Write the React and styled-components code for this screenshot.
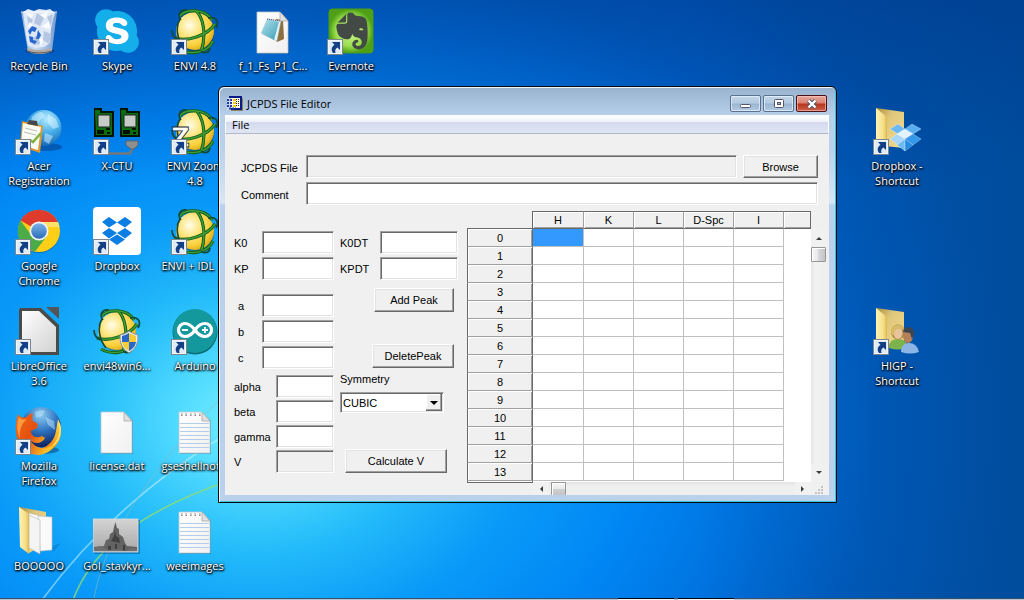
import React from "react";
import styled, { createGlobalStyle } from "styled-components";
import { FaSkype, FaEvernote } from "react-icons/fa";

const uiFont = '"Open Sans", "Noto Sans", sans-serif';
const formFont = '"Liberation Sans", Arial, sans-serif';

const GlobalStyle = createGlobalStyle`
  *, *::before, *::after { box-sizing: border-box; }
  body { margin: 0; overflow: hidden; background: #0060c8; font-family: ${formFont}; font-size: 11px; }
  button, input, select { font: inherit; color: inherit; }
`;

/* ---------- desktop ---------- */

const Desktop = styled.div`
  position: relative;
  min-height: 100vh;
  display: flex;
  flex-direction: column;
  overflow: hidden;
  background:
    linear-gradient(to bottom, rgba(0, 50, 130, 0.4), rgba(0, 60, 140, 0) 30%),
    linear-gradient(to right, rgba(0, 64, 124, 0) 68%, rgba(0, 64, 124, 0.42) 100%),
    radial-gradient(ellipse 74% 98% at 25% 70%, #7cf0ff 0%, #56deff 9%, #24bcfa 22%, #0a9af8 36%, #0086f4 52%, #0070dc 68%, #005fc6 82%, #0056b6 100%);
`;

const Wallpaper = styled.svg`
  position: absolute;
  left: 0;
  bottom: 0;
`;

const IconGrid = styled.div`
  position: relative;
  flex: 1;
  display: grid;
  grid-template-columns: repeat(13, 78px);
  grid-template-rows: repeat(5, 100px) auto;
  padding-top: 7px;
`;

const Shortcut = styled.button`
  grid-column: ${(p) => p.$col};
  grid-row: ${(p) => p.$row};
  display: flex;
  flex-direction: column;
  align-items: center;
  align-self: start;
  gap: 3px;
  padding: 0;
  border: 0;
  background: none;
  color: #fff;
  font-family: ${uiFont};
  font-size: 11px;
  line-height: 15px;
  white-space: pre;
  text-shadow: 0 1px 2px #000, 1px 1px 2px #000, 0 0 3px rgba(0, 0, 0, 0.7);

  svg { text-shadow: none; }
`;

const Taskbar = styled.footer`
  position: relative;
  display: flex;
  justify-content: flex-start;
  height: 2px;
  padding-left: 60.4%;
  gap: 4px;
  background: #b4c4d4;
  border-top: 1px solid #3a5068;
`;

const TaskEdge = styled.span`
  width: 56px;
  height: 1px;
  background: #f4f6f8;
  box-shadow: 0 -1px #05080c;
`;

/* ---------- window ---------- */

const Window = styled.section`
  position: absolute;
  left: 218px;
  top: 86px;
  width: 619px;
  padding: 0 7px 7px 6px;
  border: 1px solid #0a0a0a;
  border-radius: 6px 6px 0 0;
  background: linear-gradient(to bottom, #98b2cf 0, #b7cfe9 28px, #b9d1ea 60px, #d9e6f4 116px, #b9d1ea 118px);
  box-shadow: inset 1px 1px #eef5fc, inset -1px -1px #35c6de;
  color: #000;
`;

const TitleBar = styled.header`
  display: flex;
  align-items: center;
  gap: 4px;
  height: 28px;
  padding: 5px 2px 0 2px;
  font-family: ${uiFont};
  font-size: 11px;
`;

const Title = styled.h1`
  flex: 1;
  margin: 0;
  font-size: 11px;
  font-weight: 400;
`;

const CaptionButtons = styled.div`
  display: flex;
  gap: 2px;
`;

const CaptionButton = styled.button`
  display: flex;
  align-items: center;
  justify-content: center;
  width: 31px;
  height: 17px;
  padding: 0;
  border: 1px solid ${(p) => (p.$close ? "#4c1017" : "#5a7190")};
  border-radius: 2px;
  background: ${(p) =>
    p.$close
      ? "linear-gradient(#e6a89c 0, #d98374 7px, #b8351c 8px, #c9604a 100%)"
      : "linear-gradient(#c3d6ea 0, #b4cae1 7px, #9bb5d0 8px, #b3cbe4 100%)"};
  box-shadow: inset 0 0 0 1px ${(p) => (p.$close ? "rgba(255,210,200,.55)" : "rgba(235,245,255,.7)")};
`;

const Client = styled.div`
  background: #f0f0f0;
`;

const MenuBar = styled.nav`
  height: 19px;
  border-left: 1px solid #fff;
  border-right: 1px solid #fff;
  border-bottom: 1px solid #b2b8cc;
  background: linear-gradient(#fff 0, #eef1f8 7px, #d4daed 7px, #e0e5f4 100%);
`;

const MenuButton = styled.button`
  display: block;
  padding: 0 6px;
  border: 0;
  background: none;
  font-family: ${uiFont};
  font-size: 11px;
  line-height: 19px;
`;

const Editor = styled.form`
  padding-top: 21px;
`;

const FileRows = styled.div`
  display: flex;
  flex-direction: column;
  gap: 4px;
  padding: 0 11px 6px 16px;
`;

const FileRow = styled.div`
  display: flex;
  align-items: center;
`;

const FileLabel = styled.label`
  width: 65px;
  padding-top: 3px;
`;

const TextBox = styled.input`
  flex: ${(p) => (p.$width ? "none" : 1)};
  width: ${(p) => (p.$width ? `${p.$width}px` : "auto")};
  min-width: 0;
  height: 23px;
  padding: 0 4px;
  outline: 0;
  border: 1px solid;
  border-color: #a0a0a0 #fff #fff #a0a0a0;
  border-radius: 0;
  background: ${(p) => (p.readOnly ? "#f0f0f0" : "#fff")};
  box-shadow: inset 1px 1px #696969, inset -1px -1px #e3e3e3;
`;

const PushButton = styled.button`
  width: ${(p) => p.$width}px;
  height: ${(p) => p.$height || 24}px;
  padding: 0;
  border: 1px solid;
  border-color: #fff #696969 #696969 #fff;
  background: #f0f0f0;
  box-shadow: inset -1px -1px #a0a0a0, inset 1px 1px #e3e3e3;
`;

const BrowseButton = styled(PushButton)`
  margin-left: 6px;
`;

const Workspace = styled.div`
  display: flex;
  align-items: flex-start;
  padding: 0 2px 0 9px;
`;

const FieldColumn = styled.div`
  display: flex;
  flex-direction: column;
  gap: 14px;
  width: 100px;
  margin: 20px 6px 0 0;
`;

const FieldGroup = styled.div`
  display: flex;
  flex-direction: column;
  gap: ${(p) => p.$gap || 3}px;
`;

const LowerFields = styled(FieldGroup)`
  margin-top: -8px;
`;

const Field = styled.div`
  display: flex;
  align-items: center;
  justify-content: space-between;
  padding-left: ${(p) => p.$indent || 0}px;
`;

const ActionColumn = styled.div`
  display: flex;
  flex-direction: column;
  width: 118px;
  margin: 20px 9px 0 0;
`;

const PeakButtons = styled.div`
  display: flex;
  flex-direction: column;
  align-items: flex-end;
  gap: 32px;
  padding: 8px 4px 4px 0;
`;

const SymmetryField = styled.div`
  display: flex;
  flex-direction: column;
  gap: 6px;
  line-height: 14px;
`;

const SelectFrame = styled.div`
  position: relative;
  width: 104px;
`;

const Select = styled.select`
  appearance: none;
  display: block;
  width: 100%;
  height: 21px;
  padding: 0 18px 0 2px;
  outline: 0;
  border: 1px solid;
  border-color: #a0a0a0 #fff #fff #a0a0a0;
  border-radius: 0;
  background: #fff;
  box-shadow: inset 1px 1px #696969, inset -1px -1px #e3e3e3;
`;

const SelectArrow = styled.svg`
  position: absolute;
  top: 2px;
  right: 2px;
  pointer-events: none;
`;

const CalculateRow = styled.div`
  padding: 36px 0 0 5px;
`;

/* ---------- spreadsheet ---------- */

const Sheet = styled.div`
  flex: 1;
  display: grid;
  grid-template-columns: 1fr 16px;
`;

const Table = styled.table`
  width: 100%;
  table-layout: fixed;
  border-spacing: 0;
  text-align: center;
  line-height: 14px;

  th, td { height: 18px; padding: 0; font-weight: 400; }
`;

const Corner = styled.td`
  border-right: 1px solid #696969;
  border-bottom: 1px solid #696969;
`;

const ColumnHead = styled.th`
  border-top: 1px solid #696969;
  border-bottom: 1px solid #696969;
  border-right: 1px solid ${(p) => (p.$last ? "#696969" : "#a0a0a0")};
  background: #f0f0f0;
  box-shadow: inset 1px 1px #fff, inset 0 -1px #a0a0a0;
`;

const RowHead = styled.th`
  border-left: 1px solid #696969;
  border-right: 1px solid #696969;
  border-bottom: 1px solid #a0a0a0;
  background: #f0f0f0;
  box-shadow: inset 1px 1px #fff, inset -1px 0 #a0a0a0;
`;

const Cell = styled.td`
  border-right: 1px solid #c0c0c0;
  border-bottom: 1px solid #c0c0c0;
  background: ${(p) => (p.$selected ? "#3399ff" : "#fff")};
`;

const Blank = styled.td`
  background: #fff;
`;

const SheetFoot = styled.div`
  grid-column: 1 / -1;
  display: flex;
  height: 14px;
`;

const HeadFoot = styled.div`
  width: 66px;
  height: 2px;
  border: 1px solid #696969;
  border-top: 0;
  background: #fff;
`;

const HorizontalBar = styled.div`
  flex: 1;
  display: flex;
  align-items: center;
  justify-content: space-between;
  overflow: hidden;
  border-top: 1px solid #fff;
  background: linear-gradient(#e3e3e3, #efefef 4px);
`;

const VerticalBar = styled.div`
  display: flex;
  flex-direction: column;
  align-items: flex-start;
  margin-top: 18px;
  background: linear-gradient(to right, #e6e6e6, #f1f1f1 4px, #efefef);
`;

const ArrowButton = styled.button`
  display: flex;
  align-items: center;
  justify-content: center;
  width: 16px;
  height: ${(p) => p.$height || 17}px;
  padding: 0;
  border: 0;
  background: #f1f1f1;
`;

const Thumb = styled.div`
  width: 15px;
  height: ${(p) => (p.$flat ? 13 : 15)}px;
  border: 1px solid #979797;
  border-bottom-width: ${(p) => (p.$flat ? 0 : 1)}px;
  border-radius: 1px;
  background: ${(p) =>
    p.$flat
      ? "linear-gradient(#f5f5f5 0, #eaeaea 50%, #d0d0d0 52%, #c4c4c8)"
      : "linear-gradient(to right, #f5f5f5 0, #e9e9eb 45%, #d7d7da 50%, #c4c4c8)"};
  box-shadow: inset 1px 1px #fff;
`;

const Track = styled.div`
  flex: 1;
`;

const TrackGap = styled.div`
  width: 2px;
  height: 1px;
`;

const Grip = styled.div`
  display: flex;
  align-items: flex-end;
  justify-content: flex-end;
  width: 16px;
  background: #f0f0f0;
`;

/* ---------- icon drawings ---------- */

const Gradients = () => (
  <svg width="0" height="0" style={{ position: "absolute" }} aria-hidden="true">
    <defs>
      <radialGradient id="gold" cx=".36" cy=".35" r=".72">
        <stop offset="0" stopColor="#fffdea" />
        <stop offset=".35" stopColor="#ffe88c" />
        <stop offset=".75" stopColor="#fbcf38" />
        <stop offset="1" stopColor="#d8a418" />
      </radialGradient>
      <radialGradient id="globe" cx=".6" cy=".25" r=".85">
        <stop offset="0" stopColor="#b8ecff" />
        <stop offset=".45" stopColor="#48aee8" />
        <stop offset="1" stopColor="#0a55a8" />
      </radialGradient>
      <radialGradient id="foxGlobe" cx=".5" cy=".2" r=".8">
        <stop offset="0" stopColor="#8ccbf2" />
        <stop offset=".5" stopColor="#2f74c0" />
        <stop offset="1" stopColor="#0b1f5c" />
      </radialGradient>
      <linearGradient id="fox" x1="0" y1="0" x2="1" y2=".6">
        <stop offset="0" stopColor="#f06a1c" />
        <stop offset=".5" stopColor="#e4500e" />
        <stop offset="1" stopColor="#fbc52c" />
      </linearGradient>
      <linearGradient id="foxTail" x1="0" y1="1" x2="1" y2="0">
        <stop offset="0" stopColor="#e04d0c" />
        <stop offset=".5" stopColor="#f7941d" />
        <stop offset="1" stopColor="#ffe34d" />
      </linearGradient>
      <linearGradient id="folderFront" x1="0" x2="1">
        <stop offset="0" stopColor="#fff3b8" />
        <stop offset=".7" stopColor="#f5dd84" />
        <stop offset="1" stopColor="#d9b850" />
      </linearGradient>
      <linearGradient id="folderBack" x1="0" x2="1" y2="1">
        <stop offset="0" stopColor="#a88d3c" />
        <stop offset=".35" stopColor="#dfc67a" />
        <stop offset="1" stopColor="#f2dc90" />
      </linearGradient>
      <linearGradient id="sheetPaper" x1="0" x2="1" y2="1">
        <stop offset="0" stopColor="#fff" />
        <stop offset="1" stopColor="#f0f0f0" />
      </linearGradient>
      <linearGradient id="libre" x1="0" x2="1" y2="1">
        <stop offset="0" stopColor="#fff" />
        <stop offset="1" stopColor="#d2d2d2" />
      </linearGradient>
      <linearGradient id="pad" x1="0" x2="1" y2="1">
        <stop offset="0" stopColor="#b7e4ee" />
        <stop offset="1" stopColor="#3b9db5" />
      </linearGradient>
      <radialGradient id="leaf">
        <stop offset="0" stopColor="#d4f59a" />
        <stop offset=".7" stopColor="#9ade4c" />
        <stop offset="1" stopColor="#4fa016" />
      </radialGradient>
      <linearGradient id="chromeBlue" x2="0" y2="1">
        <stop offset="0" stopColor="#7db4e8" />
        <stop offset="1" stopColor="#2a6cb8" />
      </linearGradient>
      <linearGradient id="binGlass" x2="1">
        <stop offset="0" stopColor="#8fb0dc" />
        <stop offset=".4" stopColor="#e4eefa" />
        <stop offset="1" stopColor="#7d9fd0" />
      </linearGradient>
      <linearGradient id="fog" x2="0" y2="1">
        <stop offset="0" stopColor="#d4d4d4" />
        <stop offset="1" stopColor="#a8a8a8" />
      </linearGradient>
    </defs>
  </svg>
);

const LinkArrow = () => (
  <g>
    <rect x=".5" y="32.500" width="15" height="15" fill="#f2f6fa" stroke="#7c868e" />
    <rect x="2" y="34" width="12" height="12" fill="#dfeaf5" />
    <path d="M5 35h8v8l-2.600-2.500c-2 1.300-2.600 3.200-1.900 5.500H6C3.700 42.500 4.700 39.700 7.500 37.700z" fill="#123f86" />
  </g>
);

const Bin = () => (
  <>
    <ellipse cx="25" cy="44" rx="15" ry="3" fill="#042c70" opacity=".45" />
    <path d="M6 5h36l-5 39q-12 5-24 0z" fill="url(#binGlass)" opacity=".9" />
    <path d="M8 5l5-3 6 2 5-2 7 1 4-1 5 4-2 6-2 10-1 14-6 4-8 1-8-2-2-10z" fill="#dfe8f6" />
    <path d="M12 9l6 4-4 7zM22 6l7 5-4 8-6-3zM32 10l6-3-2 12zM16 32l7-4 2 9-7 1zM29 24l7 3-2 10-6-4z" fill="#b4c6e2" />
    <path d="M11 6l8 1-3 4zM25 8l8-3-2 7zM26 20l8-6 1 8zM24 30l4 2-2 8zM12 20l3-5 5 6z" fill="#fafcff" />
    <path d="M13 24l4-5 5 2-2 4-3-1-2 4zM23 23l3 5-2 4h-3l1-4zM14 29l4 1v3l4 1-2 3-5-2z" fill="#2765d0" />
    <path d="M12 41q12 4 25 0l-.5 3.500q-12 5-24 0z" fill="#b3aaa2" />
    <path d="M12 44q12 4 24.500 0" fill="none" stroke="#5c5b60" />
    <path d="M6 5h36" stroke="#fff" strokeWidth="1.200" opacity=".8" />
  </>
);

const Skype = () => (
  <>
    <circle cx="24" cy="24" r="15" fill="#fff" />
    <FaSkype x="-1" y="-1" size={50} color="#14aeea" />
  </>
);

const EnviGlobe = () => (
  <>
    <ellipse cx="25" cy="27" rx="18" ry="18" fill="#06301a" opacity=".4" />
    <circle cx="24" cy="24" r="19" fill="url(#gold)" />
    <g fill="none" stroke="#155f1c" strokeWidth="3.200">
      <path d="M9 9C14 2 34 1 41 13M8 42c10 6 28 5 34-8M24 3c8 6 12 24 6 42M4 31c12 4 32-2 40-14" />
    </g>
    <g fill="none" stroke="#3f9f35" strokeWidth="1.400">
      <path d="M9 9C14 2 34 1 41 13M8 42c10 6 28 5 34-8M24 3c8 6 12 24 6 42M4 31c12 4 32-2 40-14" />
    </g>
    <path d="M1 23c0 6 3 9 8 10M37 11c7-2 12 3 8 10M16 3c-7-1-10 5-6 10M30 44c4 3 8 2 9-3M9 12C4 20 6 32 13 41" fill="none" stroke="#124a3c" strokeWidth="1.700" />
  </>
);

const EnviZoom = () => (
  <>
    <EnviGlobe />
    <text x="0" y="40" fontFamily="DejaVu Sans, sans-serif" fontWeight="700" fontSize="26" fill="#fff" stroke="#1a2b3c" strokeWidth=".8">Z</text>
  </>
);

const EnviSetup = () => (
  <>
    <EnviGlobe />
    <path d="M27 28q6-1 9-4 4 3 9 4 1 12-9 18-10-6-9-18z" fill="#e9edf2" stroke="#8c969e" />
    <path d="M29 29q4-1 7-3v9h-7zM36 35h7q-1 6-7 9z" fill="#2a66c4" />
    <path d="M36 26q4 2 7 3v6h-7zM29 35h7v9q-6-3-7-9z" fill="#f8cc38" />
  </>
);

const Page = ({ children }) => (
  <>
    <path d="M9 6h23l8 8v33H9z" fill="#03386e" opacity=".35" />
    <path d="M8 5h23l8 9v32H8z" fill="url(#sheetPaper)" stroke="#c2c8cc" strokeWidth=".8" />
    {children}
    <path d="M31 5v9h8z" fill="#e0e0e0" stroke="#aaa" strokeWidth=".8" />
  </>
);

const NotebookPage = () => (
  <Page>
    <g transform="translate(0 1)">
      <path d="M27 11l7 1 1 19-7 3-1-2z" fill="#8c6f3c" />
      <path d="M19 11l13 2-4 20-15-7z" fill="#e8f3f6" stroke="#8babb4" strokeWidth=".5" />
      <path d="M18 11l12 3-5 18-13-7z" fill="url(#pad)" />
      <path d="M18 11l13 2" stroke="#546" strokeDasharray="1 1" />
    </g>
  </Page>
);

const LinedPage = () => (
  <Page>
    <path d="M9 16.500h29M9 20.500h29M9 24.500h29M9 28.500h29M9 32.500h29M9 36.500h29M9 40.500h29" stroke="#b4cdea" />
    <path d="M10 7.500h20" stroke="#888" strokeWidth="3" strokeDasharray="1.500 3" fill="none" />
    <path d="M10 7h20" stroke="#fff" strokeWidth="1.200" strokeDasharray="1.500 3" fill="none" />
  </Page>
);

const Evernote = () => (
  <>
    <rect x="2" y="2" width="44" height="44" rx="3" fill="url(#leaf)" stroke="#4c9a18" />
    <FaEvernote x="4" y="3" size={42} color="#434a45" />
  </>
);

const Acer = () => (
  <>
    <ellipse cx="31" cy="40" rx="16" ry="4" fill="#043a80" opacity=".5" />
    <circle cx="28.500" cy="21" r="18" fill="url(#globe)" />
    <path d="M17 10q5-5 10-5l3 4-5 4-4 8-6-2zM33 7l8 5 3 8-6 2-5-6zM30 26l8 3-4 8-5-3z" fill="#dcf5ff" opacity=".5" />
    <path d="M7 14l21 5-3 27-20-7z" fill="#e0952e" />
    <path d="M8 16l18 4-3 23-17-5z" fill="#fbfbf5" />
    <path d="M14 13l8 1 1 5-11-2z" fill="#45494c" />
    <path d="M10 21l12 3M9 25l12 3" stroke="#bbb" />
    <path d="M15 33l3 2 8-9" fill="none" stroke="#7cb342" strokeWidth="2.500" />
  </>
);

const Handset = () => (
  <>
    <path d="M1 1h8v3h12v26H1z" fill="#041404" />
    <path d="M2 3h5v3h12v22H3z" fill="#0a6d12" />
    <path d="M5 8h12v12H5z" fill="#c8ccc8" stroke="#222" />
    <path d="M4 23h7v4H4zM13 21h4v2h-4zM14 25h3v2h-3z" fill="#021002" />
  </>
);

const Xctu = () => (
  <>
    <Handset />
    <g transform="translate(26 0)"><Handset /></g>
    <path d="M16 46.500h21l4-8" fill="none" stroke="#74787a" strokeWidth="2.500" />
    <path d="M33 34h12v4l-4 4h-3l-5-4z" fill="#8d9092" stroke="#626668" />
  </>
);

const Chrome = () => (
  <>
    <circle cx="24" cy="25" r="21" fill="#043a70" opacity=".4" />
    <circle cx="24" cy="24" r="21" fill="#fdd017" />
    <path d="M24 24L5.500 13.500A21 21 0 0 1 43 15H24z" fill="#df3b2c" />
    <path d="M24 24l8 5-12 15.600A21 21 0 0 1 5.500 13.500l10.300 14z" fill="#4bac47" />
    <path d="M43 15H24v5h20.500z" fill="#fbe069" />
    <circle cx="24" cy="24" r="9.500" fill="#f4f4f4" />
    <circle cx="24" cy="24" r="7.800" fill="url(#chromeBlue)" />
  </>
);

const Dropbox = () => (
  <>
    <rect width="48" height="48" rx="4" fill="#fff" />
    <path d="M16 10l8 5.500-8 5-7-5.500zM32 10l7 5-7 5.500-8-5zM16 21l8 5-8 5.500-7-5.500zM32 21l7 5-7 5.500-8-5.500zM16 32.500l8-5 8 5-8 5.500z" fill="#0a7ee3" />
  </>
);

const Libre = () => (
  <>
    <path d="M6 1h20l18 17v30H6q-2 0-2-2V3q0-2 2-2z" fill="#4a4a4a" />
    <path d="M7 4h17l17 16v25H7z" fill="url(#libre)" />
    <path d="M31 0h13v12z" fill="#555" />
  </>
);

const Arduino = () => (
  <>
    <circle cx="24" cy="25" r="22.500" fill="#056a70" />
    <circle cx="24" cy="24" r="22" fill="#12989d" />
    <path d="M24 23c-4-5-7-6.500-10-6.500a6.500 6.500 0 0 0 0 13c4 0 7-2 10-6.500s6-6.500 10-6.500a6.500 6.500 0 0 1 0 13c-4 0-7-2-10-6.500z" fill="none" stroke="#fff" strokeWidth="3.200" />
    <path d="M11 23h6M31 23h6M34 20v6" stroke="#fff" strokeWidth="1.800" />
  </>
);

const Firefox = () => (
  <>
    <ellipse cx="26" cy="43" rx="18" ry="4" fill="#03386e" opacity=".5" />
    <circle cx="26" cy="20" r="20" fill="url(#foxGlobe)" />
    <path d="M20 5q6-3 10-1l-3 5-6 2zM30 10l9 4 1 9-7-5z" fill="#bfe6fa" opacity=".5" />
    <path d="M43 12c8 17-1 33-18 34-6 0-10-2-13-5 14 4 27-3 29-17z" fill="url(#foxTail)" />
    <path d="M3 7c2 4 5 4 9 3 1-2 4-4 6-3-1 3-1 5 0 7l5 3-1 4-6 3c0 5 5 8 11 5l3 2c-3 6-10 6-14 3 5 9 17 9 24 2-3 12-20 16-31 7C0 36-1 19 3 7z" fill="url(#fox)" />
    <path d="M4 10c3 3 5 3 8 2-6 5-8 12-7 20C2 25 1 17 4 10z" fill="#ff9a3d" />
    <path d="M44 16c3 8 0 17-5 22" fill="none" stroke="#ffe86a" strokeWidth="1.500" />
  </>
);

const OpenFolder = () => (
  <>
    <path d="M36 40l10-4-8 9z" fill="#04569c" opacity=".3" />
    <path d="M4 0l27 5v32l-17 9-8-7z" fill="url(#folderBack)" />
    <path d="M14 6l15 4v34l-15-5z" fill="#fdfdfd" stroke="#b8b8b8" strokeWidth=".6" />
    <path d="M23 9l14 1v33l-12 1z" fill="#fafafa" stroke="#b8b8b8" strokeWidth=".6" />
    <path d="M14 8l11 5v34l-11-6z" fill="#f4f4f4" stroke="#b0b0b0" strokeWidth=".6" />
    <path d="M4 0l10 7v40l-9-7z" fill="url(#folderFront)" />
  </>
);

const FolderBase = () => (
  <>
    <path d="M3 1l28 4v36l-20-2z" fill="url(#folderBack)" />
    <path d="M3 1l11 9v37L3 38z" fill="url(#folderFront)" />
  </>
);

const DropboxFolder = () => (
  <>
    <FolderBase />
    <g stroke="#fff" strokeWidth=".3">
      <path d="M25 17l7 5-7 5-8-5z" fill="#6ab8f2" />
      <path d="M39 17l9 5-8 5-8-5z" fill="#58aef0" />
      <path d="M32 22l8 5-8 5-8-5z" fill="#e2f3fe" />
      <path d="M24 27l8 5-7 6-8-6z" fill="#a8d6f7" />
      <path d="M40 27l8 5-8 6-8-6z" fill="#3498ea" />
      <path d="M24 38l8-6v12z" fill="#6cbaf4" />
      <path d="M40 38l-8-6v12z" fill="#248ce2" />
    </g>
  </>
);

const PeopleFolder = () => (
  <>
    <FolderBase />
    <path d="M16 40q0-8 9-8t9 8v1q-9 3-18 0z" fill="#7cb34c" />
    <ellipse cx="25" cy="25" rx="7" ry="7.500" fill="#a88c3c" />
    <ellipse cx="25" cy="26" rx="4.500" ry="6" fill="#e8c49c" />
    <path d="M18 26q0-8 7-8 5 0 6 5-7-3-9 1-1 4-2 5z" fill="#d8ba68" />
    <path d="M28 45q0-9 8-9t10 9q-9 3-18 0z" fill="#8cb4e4" />
    <ellipse cx="35" cy="29" rx="5" ry="7" fill="#b5805a" />
    <path d="M30 25q1-5 6-5 6 1 5 8l-2 4-2-6z" fill="#3c4650" />
  </>
);

const Photo = () => (
  <>
    <rect x="1" y="13" width="46" height="34" fill="#033a70" opacity=".4" />
    <rect y="12" width="45" height="33" fill="url(#fog)" stroke="#dcdcdc" strokeWidth=".8" />
    <path d="M1 40l10-1 2-6 3-1 1-5 3-2 1-5 1.500-5 1.500 6 2 1v5l4 3 2 6 2 3 10 1v4H1z" fill="#636363" />
    <path d="M18 34l3-5 1-6 1 6 3 2 1 5zM15 39h3v5h-3zM22 37h2v7h-2zM30 38h2v6h-2z" fill="#404040" />
    <path d="M1 41l6-2 4 2 5 2 8-1 9 2 6-3 5 1v2H1z" fill="#6f6f6f" />
  </>
);

const shortcuts = [
  { label: "Recycle Bin", col: 1, row: 1, art: Bin },
  { label: "Skype", col: 2, row: 1, art: Skype, link: true },
  { label: "ENVI 4.8", col: 3, row: 1, art: EnviGlobe, link: true },
  { label: "f_1_Fs_P1_C...", col: 4, row: 1, art: NotebookPage },
  { label: "Evernote", col: 5, row: 1, art: Evernote, link: true },
  { label: "Acer\nRegistration", col: 1, row: 2, art: Acer, link: true },
  { label: "X-CTU", col: 2, row: 2, art: Xctu, link: true },
  { label: "ENVI Zoom\n4.8", col: 3, row: 2, art: EnviZoom, link: true },
  { label: "Dropbox -\nShortcut", col: 12, row: 2, art: DropboxFolder, link: true },
  { label: "Google\nChrome", col: 1, row: 3, art: Chrome, link: true },
  { label: "Dropbox", col: 2, row: 3, art: Dropbox, link: true },
  { label: "ENVI + IDL  ...", col: 3, row: 3, art: EnviGlobe, link: true },
  { label: "LibreOffice\n3.6", col: 1, row: 4, art: Libre, link: true },
  { label: "envi48win6...", col: 2, row: 4, art: EnviSetup },
  { label: "Arduino", col: 3, row: 4, art: Arduino, link: true },
  { label: "HIGP -\nShortcut", col: 12, row: 4, art: PeopleFolder, link: true },
  { label: "Mozilla\nFirefox", col: 1, row: 5, art: Firefox, link: true },
  { label: "license.dat", col: 2, row: 5, art: Page },
  { label: "gseshellnot...", col: 3, row: 5, art: LinedPage },
  { label: "BOOOOO", col: 1, row: 6, art: OpenFolder },
  { label: "Gol_stavkyr...", col: 2, row: 6, art: Photo },
  { label: "weeimages", col: 3, row: 6, art: LinedPage },
];

const AppIcon = () => (
  <svg width="16" height="16" viewBox="0 0 16 16" aria-hidden="true">
    <path d="M4 2h12v13H4z" fill="#8c8458" />
    <path d="M2 0h13v14H2z" fill="#0a1c84" />
    <path d="M3 2h10v10H3z" fill="#fffbe6" />
    <path d="M0 2h4v12H0z" fill="#c9d8ec" />
    <path d="M0 4h9M0 7h9M0 10h9M2 12.500h7" stroke="#2438a8" strokeWidth="2" strokeDasharray="2 1" />
    <path d="M6 3h3v2H6zM6 6h3v2H6zM6 9h3v2H6z" fill="#f2c420" />
    <path d="M9 3.500h4M9 5.500h4M9 7.500h4M9 9.500h4" stroke="#332b10" strokeDasharray="1 1" />
  </svg>
);

const Triangle = ({ d }) => (
  <svg width="8" height="8" viewBox="0 0 8 8" aria-hidden="true"><path d={d} fill="#3c3c3c" /></svg>
);

const columns = ["H", "K", "L", "D-Spc", "I"];
const rows = Array.from({ length: 14 }, (_, i) => i);

const LabeledField = ({ id, label, width, indent, readOnly }) => (
  <Field $indent={indent}>
    <label htmlFor={id}>{label}</label>
    <TextBox id={id} $width={width} readOnly={readOnly} />
  </Field>
);

export default function App() {
  return (
    <Desktop>
      <GlobalStyle />
      <Gradients />
      <Wallpaper width="420" height="220" viewBox="0 380 420 220" fill="none" aria-hidden="true">
        <path d="M42 600C90 535 150 480 230 432" stroke="#c8f4ff" strokeWidth="1.600" opacity=".55" />
        <path d="M94 600C102 540 160 455 228 392" stroke="#8ab8b0" strokeWidth="1" opacity=".6" />
        <path d="M73 600C90 555 130 515 228 481" stroke="#8fdc70" strokeWidth="1.600" opacity=".8" />
      </Wallpaper>

      <IconGrid>
        {shortcuts.map(({ label, col, row, art: Art, link }) => (
          <Shortcut key={label} type="button" $col={col} $row={row}>
            <svg width="48" height="48" viewBox="0 0 48 48" aria-hidden="true">
              <Art />
              {link && <LinkArrow />}
            </svg>
            {label}
          </Shortcut>
        ))}
      </IconGrid>

      <Taskbar>
        <TaskEdge />
        <TaskEdge />
      </Taskbar>

      <Window>
        <TitleBar>
          <AppIcon />
          <Title>JCPDS File Editor</Title>
          <CaptionButtons>
            <CaptionButton type="button" aria-label="Minimize">
              <svg width="12" height="12"><rect x=".5" y="6.500" width="10" height="3" rx="1" fill="#fff" stroke="#535666" /></svg>
            </CaptionButton>
            <CaptionButton type="button" aria-label="Maximize">
              <svg width="12" height="12">
                <rect x="1.500" y="1.500" width="9" height="8" rx="1" fill="#fff" stroke="#535666" />
                <rect x="4.500" y="4.500" width="3" height="2" fill="#9bb5d0" stroke="#535666" />
              </svg>
            </CaptionButton>
            <CaptionButton type="button" aria-label="Close" $close>
              <svg width="12" height="12" viewBox="0 0 12 12">
                <path d="M2.500 2.500l7 7m0-7l-7 7" stroke="#535666" strokeWidth="4.400" />
                <path d="M2.500 2.500l7 7m0-7l-7 7" stroke="#fff" strokeWidth="2.400" />
              </svg>
            </CaptionButton>
          </CaptionButtons>
        </TitleBar>

        <Client>
          <MenuBar>
            <MenuButton type="button">File</MenuButton>
          </MenuBar>

          <Editor onSubmit={(e) => e.preventDefault()}>
            <FileRows>
              <FileRow>
                <FileLabel htmlFor="file">JCPDS File</FileLabel>
                <TextBox id="file" readOnly />
                <BrowseButton type="button" $width={75} $height={23}>Browse</BrowseButton>
              </FileRow>
              <FileRow>
                <FileLabel htmlFor="comment">Comment</FileLabel>
                <TextBox id="comment" />
              </FileRow>
            </FileRows>

            <Workspace>
              <FieldColumn>
                <FieldGroup>
                  <LabeledField id="k0" label="K0" width={72} />
                  <LabeledField id="kp" label="KP" width={72} />
                </FieldGroup>
                <FieldGroup>
                  <LabeledField id="a" label="a" width={72} indent={4} />
                  <LabeledField id="b" label="b" width={72} indent={4} />
                  <LabeledField id="c" label="c" width={72} indent={4} />
                </FieldGroup>
                <LowerFields $gap={2}>
                  <LabeledField id="alpha" label="alpha" width={58} />
                  <LabeledField id="beta" label="beta" width={58} />
                  <LabeledField id="gamma" label="gamma" width={58} />
                  <LabeledField id="v" label="V" width={58} readOnly />
                </LowerFields>
              </FieldColumn>

              <ActionColumn>
                <FieldGroup>
                  <LabeledField id="k0dt" label="K0DT" width={78} />
                  <LabeledField id="kpdt" label="KPDT" width={78} />
                </FieldGroup>
                <PeakButtons>
                  <PushButton type="button" $width={80}>Add Peak</PushButton>
                  <PushButton type="button" $width={82}>DeletePeak</PushButton>
                </PeakButtons>
                <SymmetryField>
                  <label htmlFor="symmetry">Symmetry</label>
                  <SelectFrame>
                    <Select id="symmetry" defaultValue="CUBIC">
                      <option>CUBIC</option>
                    </Select>
                    <SelectArrow width="16" height="17" aria-hidden="true">
                      <rect width="16" height="17" fill="#696969" />
                      <rect width="15" height="16" fill="#a0a0a0" />
                      <rect width="14" height="15" fill="#fff" />
                      <rect x="1" y="1" width="13" height="14" fill="#f0f0f0" />
                      <path d="M4 7h8l-4 4z" fill="#000" />
                    </SelectArrow>
                  </SelectFrame>
                </SymmetryField>
                <CalculateRow>
                  <PushButton type="button" $width={102}>Calculate V</PushButton>
                </CalculateRow>
              </ActionColumn>

              <Sheet>
                <Table>
                  <colgroup>
                    <col width="66" />
                    <col width="51" />
                    <col width="50" />
                    <col width="50" />
                    <col width="50" />
                    <col width="50" />
                    <col />
                  </colgroup>
                  <thead>
                    <tr>
                      <Corner />
                      {columns.map((name) => (
                        <ColumnHead key={name} scope="col">{name}</ColumnHead>
                      ))}
                      <ColumnHead $last />
                    </tr>
                  </thead>
                  <tbody>
                    {rows.map((n) => (
                      <tr key={n}>
                        <RowHead scope="row">{n}</RowHead>
                        {columns.map((name) => (
                          <Cell key={name} $selected={n === 0 && name === "H"} />
                        ))}
                        <Blank />
                      </tr>
                    ))}
                  </tbody>
                </Table>
                <VerticalBar>
                  <ArrowButton type="button" aria-label="Scroll up"><Triangle d="M1 6l3-3 3 3z" /></ArrowButton>
                  <TrackGap />
                  <Thumb />
                  <Track />
                  <ArrowButton type="button" aria-label="Scroll down"><Triangle d="M1 2h6L4 5z" /></ArrowButton>
                </VerticalBar>
                <SheetFoot>
                  <HeadFoot />
                  <HorizontalBar>
                    <ArrowButton type="button" aria-label="Scroll left" $height={13}><Triangle d="M6 1v6L3 4z" /></ArrowButton>
                    <TrackGap />
                    <Thumb $flat />
                    <Track />
                    <ArrowButton type="button" aria-label="Scroll right" $height={13}><Triangle d="M2 1v6l3-3z" /></ArrowButton>
                  </HorizontalBar>
                  <Grip>
                    <svg width="13" height="10" viewBox="0 0 13 10" fill="#c4c4c4" aria-hidden="true">
                      <path d="M7 1h2v2H7zM4 4h2v2H4zM7 4h2v2H7zM1 7h2v2H1zM4 7h2v2H4zM7 7h2v2H7z" />
                    </svg>
                  </Grip>
                </SheetFoot>
              </Sheet>
            </Workspace>
          </Editor>
        </Client>
      </Window>
    </Desktop>
  );
}
